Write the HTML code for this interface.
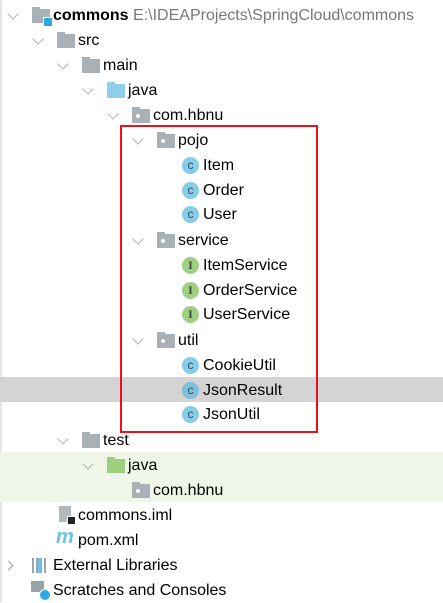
<!DOCTYPE html>
<html><head><meta charset="utf-8"><style>
body{margin:0;width:443px;height:602px;background:#fff;position:relative;overflow:hidden;font-family:"Liberation Sans","Noto Sans CJK SC",sans-serif;font-size:16px;color:#000}
.r{position:absolute;left:0;width:443px;height:25px}
.t{position:absolute;top:3px;line-height:19px;white-space:nowrap}
.a{position:absolute;top:7px;width:7px;height:7px;border-right:1.5px solid #b0b0b0;border-bottom:1.5px solid #b0b0b0;transform:rotate(45deg)}
.ar{position:absolute;top:9px;width:6px;height:6px;border-right:1.5px solid #a0a0a0;border-bottom:1.5px solid #a0a0a0;transform:rotate(-45deg)}
.f{position:absolute;top:6px;width:18px;height:14px;background:#a9b0b6}
.f:before{content:"";position:absolute;left:0;top:-2px;width:8px;height:3px;background:inherit}
.f.b{background:#8fcfe9}.f.g{background:#9ecf7e}
.f.p:after{content:"";position:absolute;left:4px;top:5px;width:4px;height:4px;border-radius:50%;background:#fff}
.c{position:absolute;top:4px;width:17px;height:17px;border-radius:50%;background:#86cde9;color:#3a4b57;font-size:12px;text-align:center;line-height:17px}
.c.i{background:#9fcf84;font-family:"Liberation Serif",serif;color:#3c4a30;font-weight:bold}
</style></head><body>
<div style="position:absolute;left:0;top:0;width:2px;height:602px;background:#e6e6e6"></div>
<div style="position:absolute;left:0;top:452px;width:443px;height:50px;background:#eff6e8"></div>
<div style="position:absolute;left:0;top:377px;width:443px;height:25px;background:#d4d4d4"></div>

<div class="r" style="top:3px"><div class="a" style="left:9px"></div><div class="f" style="left:32px"></div><div style="position:absolute;left:43px;top:14px;width:8px;height:8px;background:#2ea8e0;border:1px solid #fff"></div><div class="t" style="left:53px"><b>commons</b> <span style="color:#777">E:\IDEAProjects\SpringCloud\commons</span></div></div>
<div class="r" style="top:28px"><div class="a" style="left:34px"></div><div class="f" style="left:57px"></div><div class="t" style="left:78px">src</div></div>
<div class="r" style="top:53px"><div class="a" style="left:59px"></div><div class="f" style="left:82px"></div><div class="t" style="left:103px">main</div></div>
<div class="r" style="top:78px"><div class="a" style="left:84px"></div><div class="f b" style="left:107px"></div><div class="t" style="left:128px">java</div></div>
<div class="r" style="top:103px"><div class="a" style="left:109px"></div><div class="f p" style="left:132px"></div><div class="t" style="left:153px">com.hbnu</div></div>
<div class="r" style="top:128px"><div class="a" style="left:134px"></div><div class="f p" style="left:157px"></div><div class="t" style="left:178px">pojo</div></div>
<div class="r" style="top:153px"><div class="c" style="left:182px">c</div><div class="t" style="left:203px">Item</div></div>
<div class="r" style="top:178px"><div class="c" style="left:182px">c</div><div class="t" style="left:203px">Order</div></div>
<div class="r" style="top:202px"><div class="c" style="left:182px">c</div><div class="t" style="left:203px">User</div></div>
<div class="r" style="top:228px"><div class="a" style="left:134px"></div><div class="f p" style="left:157px"></div><div class="t" style="left:178px">service</div></div>
<div class="r" style="top:253px"><div class="c i" style="left:182px">I</div><div class="t" style="left:203px">ItemService</div></div>
<div class="r" style="top:278px"><div class="c i" style="left:182px">I</div><div class="t" style="left:203px">OrderService</div></div>
<div class="r" style="top:302px"><div class="c i" style="left:182px">I</div><div class="t" style="left:203px">UserService</div></div>
<div class="r" style="top:328px"><div class="a" style="left:134px"></div><div class="f p" style="left:157px"></div><div class="t" style="left:178px">util</div></div>
<div class="r" style="top:353px"><div class="c" style="left:182px">c</div><div class="t" style="left:203px">CookieUtil</div></div>
<div class="r" style="top:378px"><div class="c" style="left:182px;background:#7cc0dc">c</div><div class="t" style="left:203px">JsonResult</div></div>
<div class="r" style="top:402px"><div class="c" style="left:182px">c</div><div class="t" style="left:203px">JsonUtil</div></div>
<div class="r" style="top:428px"><div class="a" style="left:59px"></div><div class="f" style="left:82px"></div><div class="t" style="left:103px">test</div></div>
<div class="r" style="top:453px"><div class="a" style="left:84px"></div><div class="f g" style="left:107px"></div><div class="t" style="left:128px">java</div></div>
<div class="r" style="top:478px"><div class="f p" style="left:132px"></div><div class="t" style="left:153px">com.hbnu</div></div>
<div class="r" style="top:503px"><div style="position:absolute;left:59px;top:3px;width:12px;height:16px;background:#b3b8bd"></div><div style="position:absolute;left:67px;top:13px;width:7px;height:7px;background:#222;border:1px solid #fff"></div><div class="t" style="left:78px">commons.iml</div></div>
<div class="r" style="top:528px"><div class="t" style="left:56px;color:#6cc3e6;font-weight:bold;font-style:italic;font-size:20px;top:0">m</div><div class="t" style="left:78px">pom.xml</div></div>
<div class="r" style="top:553px"><div class="ar" style="left:5px"></div><div style="position:absolute;left:32px;top:5px;width:16px;height:15px;background:repeating-linear-gradient(90deg,#9aa3aa 0 2px,transparent 2px 4px)"></div><div style="position:absolute;left:38px;top:5px;width:3px;height:15px;background:#6cc3e6"></div><div class="t" style="left:53px">External Libraries</div></div>
<div class="r" style="top:578px"><div style="position:absolute;left:31px;top:3px;width:13px;height:11px;background:#9aa3aa"></div><div style="position:absolute;left:39px;top:11px;width:10px;height:10px;border-radius:50%;background:#2ea8e0;border:1px solid #fff"></div><div class="t" style="left:53px">Scratches and Consoles</div></div>

<div style="position:absolute;left:120px;top:125px;width:194px;height:304px;border:2px solid #e8111e"></div>
</body></html>
